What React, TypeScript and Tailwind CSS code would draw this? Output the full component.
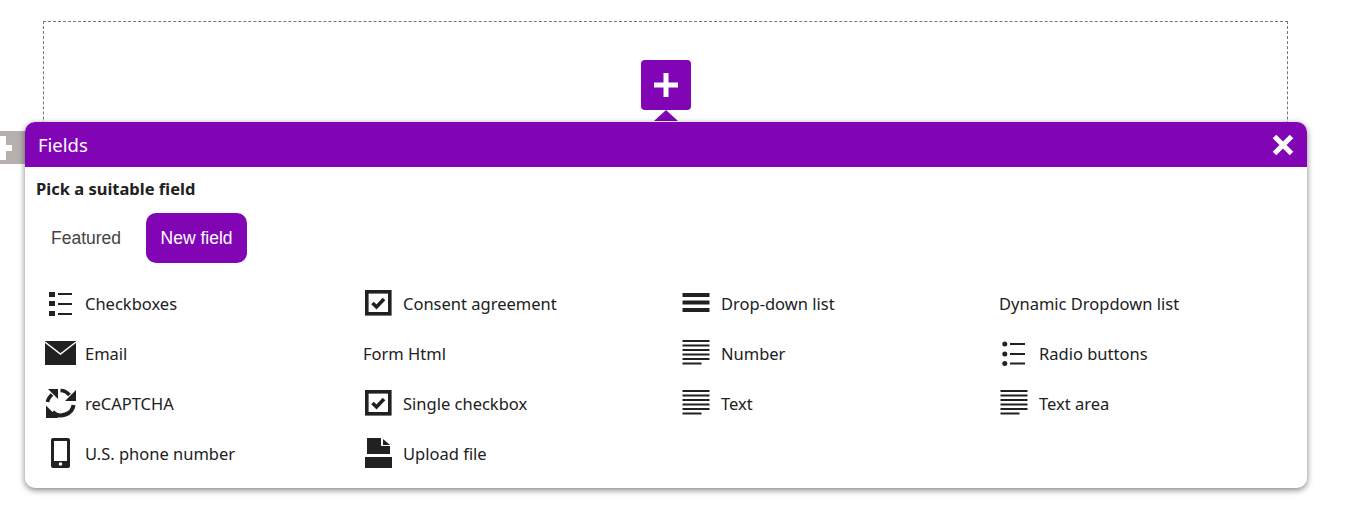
const fields = [
  { label: 'Checkboxes', icon: 'list' },
  { label: 'Consent agreement', icon: 'check' },
  { label: 'Drop-down list', icon: 'menu' },
  { label: 'Dynamic Dropdown list', icon: '' },
  { label: 'Email', icon: 'mail' },
  { label: 'Form Html', icon: '' },
  { label: 'Number', icon: 'lines' },
  { label: 'Radio buttons', icon: 'radio' },
  { label: 'reCAPTCHA', icon: 'loop' },
  { label: 'Single checkbox', icon: 'check' },
  { label: 'Text', icon: 'lines' },
  { label: 'Text area', icon: 'lines' },
  { label: 'U.S. phone number', icon: 'phone' },
  { label: 'Upload file', icon: 'file' },
]

function FieldIcon({ name }: { name: string }) {
  if (name === 'list') {
    return (
      <svg width="32" height="32" viewBox="0 0 32 32" fill="#212121">
        <rect x="4" y="4" width="6" height="5" />
        <rect x="4" y="13" width="6" height="5" />
        <rect x="4" y="23" width="6" height="5" />
        <rect x="13" y="5" width="14" height="2" />
        <rect x="13" y="15" width="14" height="2" />
        <rect x="13" y="25" width="14" height="2" />
      </svg>
    )
  }
  if (name === 'check') {
    return (
      <svg width="32" height="32" viewBox="0 0 32 32" fill="none">
        <rect x="3.800" y="3.800" width="23" height="22" stroke="#212121" strokeWidth="3.600" />
        <path d="M9.500 15l4 4 7.500-8" stroke="#212121" strokeWidth="3.600" />
      </svg>
    )
  }
  if (name === 'menu') {
    return (
      <svg width="32" height="32" viewBox="0 0 32 32" fill="#212121">
        <rect x="1.500" y="5" width="27" height="4" />
        <rect x="1.500" y="12.500" width="27" height="4" />
        <rect x="1.500" y="20" width="27" height="4" />
      </svg>
    )
  }
  if (name === 'lines') {
    return (
      <svg width="32" height="32" viewBox="0 0 32 32" fill="#212121">
        <rect x="1.500" y="2" width="27" height="2" />
        <rect x="1.500" y="6.500" width="27" height="2" />
        <rect x="1.500" y="11" width="27" height="2" />
        <rect x="1.500" y="15.500" width="27" height="2" />
        <rect x="1.500" y="20" width="27" height="2" />
        <rect x="1.500" y="24.500" width="19" height="2" />
      </svg>
    )
  }
  if (name === 'radio') {
    return (
      <svg width="32" height="32" viewBox="0 0 32 32" fill="#212121">
        <circle cx="5.800" cy="6" r="2.500" />
        <circle cx="5.800" cy="16" r="2.500" />
        <circle cx="5.800" cy="25.500" r="2.500" />
        <rect x="11" y="5" width="15" height="2" />
        <rect x="11" y="15" width="15" height="2" />
        <rect x="11" y="24.500" width="15" height="2" />
      </svg>
    )
  }
  if (name === 'mail') {
    return (
      <svg width="32" height="32" viewBox="0 0 32 32" fill="#212121">
        <path d="M0 3h31v24H0z" />
        <path d="M0 4l15.500 12L31 4" fill="none" stroke="#fff" strokeWidth="1.400" />
      </svg>
    )
  }
  if (name === 'loop') {
    return (
      <svg width="32" height="32" viewBox="0 0 32 32" fill="#212121">
        <path d="M3 1h10v10z" />
        <path d="M2.500 14c.3-3 2-5 4.500-7.500" fill="none" stroke="#212121" strokeWidth="3.600" />
        <path d="M31 2v11H20z" />
        <path d="M15.500 2.500c3.500 0 6.500 1.500 9 4.500" fill="none" stroke="#212121" strokeWidth="3.600" />
        <path d="M1 17.500V30h12.500z" />
        <path d="M28.500 17C27.500 26 15 31 7.500 24" fill="none" stroke="#212121" strokeWidth="4" />
      </svg>
    )
  }
  if (name === 'phone') {
    return (
      <svg width="32" height="32" viewBox="0 0 32 32" fill="#212121">
        <path d="M6 2a2 2 0 0 1 2-2h15a2 2 0 0 1 2 2v26a2 2 0 0 1-2 2H8a2 2 0 0 1-2-2z" />
        <rect x="9" y="3" width="13" height="20" fill="#fff" />
        <circle cx="15.500" cy="26" r="1.800" fill="#fff" />
      </svg>
    )
  }
  if (name === 'file') {
    return (
      <svg width="32" height="32" viewBox="0 0 32 32" fill="#212121">
        <path d="M4 0h14v8h9v8H4z" />
        <path d="M20 1l7 6h-7z" />
        <rect x="2" y="19" width="27" height="11" />
      </svg>
    )
  }
  return null
}

export default function App() {
  return (
    <div className="relative h-[530px] overflow-hidden bg-white font-['Noto_Sans',sans-serif] text-[#212121]">
      <div className="pt-[21px] pl-[43px]">
        <div className="flex h-[400px] w-[1245px] justify-center border border-dashed border-[#777] pt-[38px]">
          <div className="relative flex h-[50px] w-[50px] items-center justify-center rounded-[4px] bg-[#8205b5]">
            <svg width="26" height="26" viewBox="0 0 26 26" fill="#fff">
              <path d="M10.500 1h5v9.500H25v5h-9.500V25h-5v-9.500H1v-5h9.500z" />
            </svg>
            <div className="absolute top-full left-[13px] h-0 w-0 border-x-[12px] border-b-[11px] border-x-transparent border-b-[#8205b5]" />
          </div>
        </div>
      </div>

      <div className="absolute top-[131px] left-0 flex h-[33px] w-[26px] items-center bg-[#b5b0ad]">
        <div className="relative h-[24px] w-[12px] overflow-hidden">
          <div className="absolute top-[9px] left-0 h-[6px] w-[12px] bg-white" />
          <div className="absolute top-0 left-0 h-[24px] w-[6px] bg-white" />
        </div>
      </div>

      <div className="absolute top-[122px] left-[25px] w-[1282px] rounded-[10px] bg-white shadow-[0_2px_6px_rgba(0,0,0,0.5)]">
        <div className="flex h-[45px] items-center justify-between rounded-t-[10px] bg-[#8205b5] pr-[12px] pl-[13px] text-white">
          <span className="pt-[1px] text-[18.5px]">Fields</span>
          <svg width="24" height="24" viewBox="0 0 24 24" fill="none">
            <path d="M3.500 3.500l17 17M20.500 3.500l-17 17" stroke="#fff" strokeWidth="5" />
          </svg>
        </div>
        <div className="px-[11px] pt-[11px] text-[16.5px] leading-[22px] font-bold">Pick a suitable field</div>
        <div className="flex gap-[10px] pt-[13px] pl-[11px] font-['Liberation_Sans',sans-serif] text-[17.500px]">
          <div className="flex h-[50px] items-center px-[15px] text-[#444]">Featured</div>
          <div className="flex h-[50px] w-[101px] items-center justify-center rounded-[10px] bg-[#8205b5] text-white">New field</div>
        </div>
        <div className="grid grid-cols-[repeat(4,318px)] pt-[16px] pb-[9px] pl-[20px]">
          {fields.map((field) => (
            <div key={field.label} className="flex h-[50px] items-center text-[16.5px]">
              {field.icon && (
                <span className="mr-[8px] flex h-[32px] w-[32px] shrink-0 items-center justify-center">
                  <FieldIcon name={field.icon} />
                </span>
              )}
              <span>{field.label}</span>
            </div>
          ))}
        </div>
      </div>
    </div>
  )
}
